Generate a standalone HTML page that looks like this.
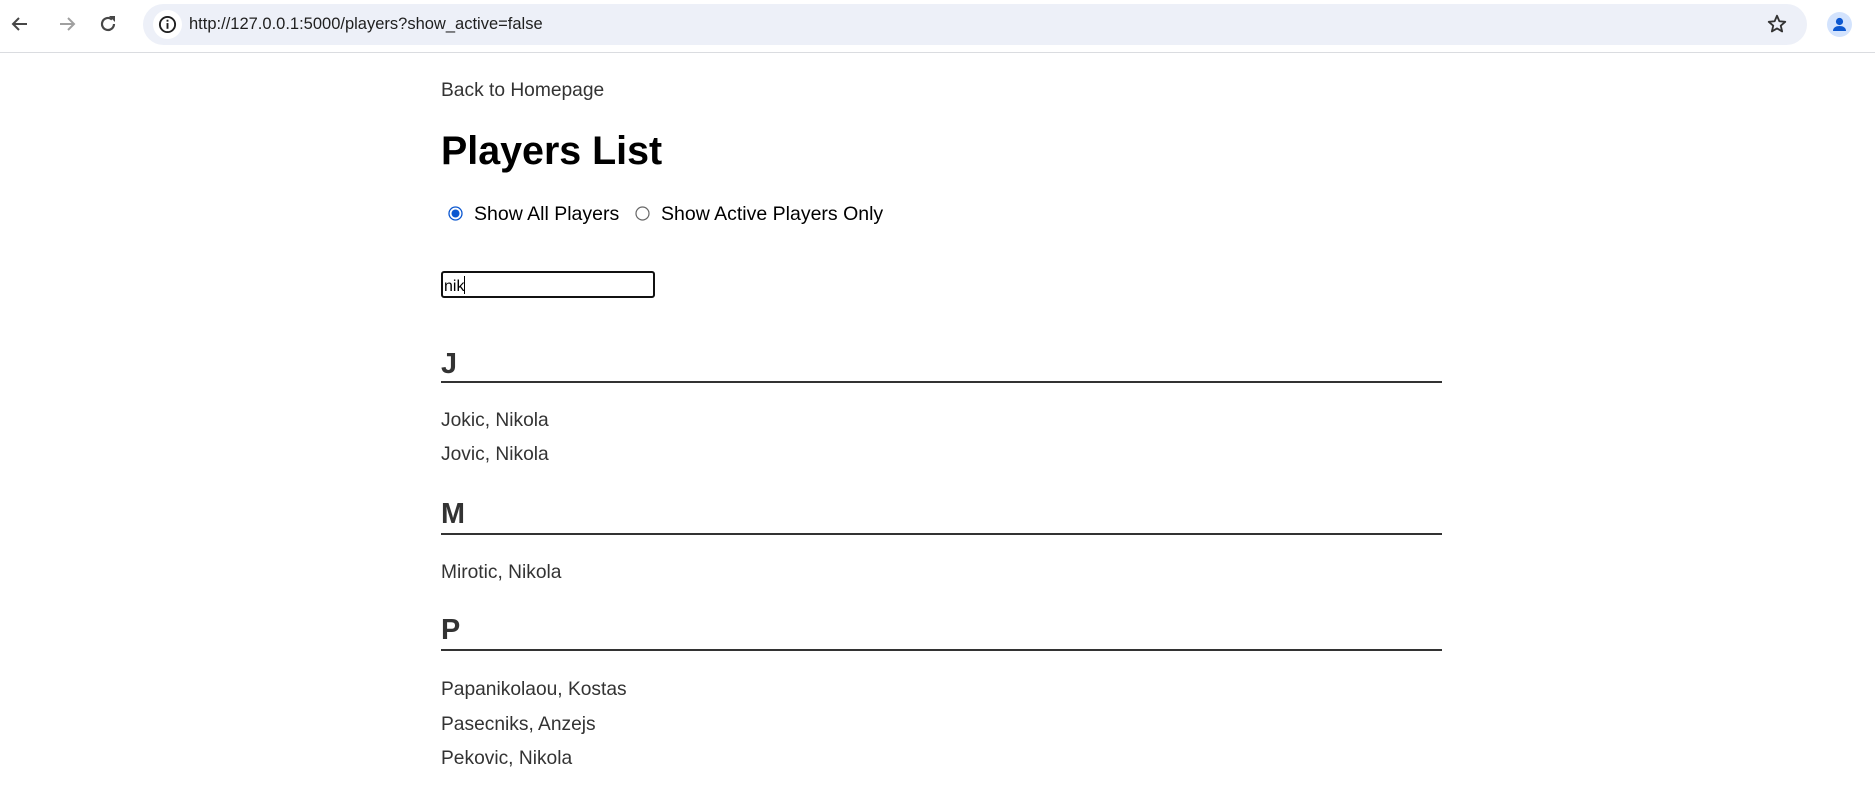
<!DOCTYPE html>
<html><head><meta charset="utf-8">
<style>
*{margin:0;padding:0;box-sizing:border-box}
html,body{width:1875px;height:786px;overflow:hidden;background:#fff;font-family:"Liberation Sans",Arial,sans-serif}
.tb{position:absolute;left:0;top:0;width:1875px;height:53px;background:#fff;border-bottom:1px solid #dadce0}
.pill{position:absolute;left:143px;top:4px;width:1664px;height:41px;border-radius:21px;background:#edf0f8}
.info{position:absolute;left:153px;top:10px;width:29px;height:29px;border-radius:50%;background:#fff}
.url{position:absolute;left:189px;top:13px;font-size:16.5px;color:#1f1f1f;line-height:22px;white-space:nowrap}
.url span{color:#474747}
.a{position:absolute;line-height:1;white-space:nowrap}
.t{font-size:19.2px;color:#333}
.h{font-size:28.8px;font-weight:bold;color:#333}
.hr{position:absolute;left:441px;width:1001px;height:2px;background:#333}
</style></head><body>
<div class="tb">
<svg style="position:absolute;left:8px;top:12px" width="24" height="24" viewBox="0 0 24 24"><path d="M19 12H5M11 6l-6 6 6 6" fill="none" stroke="#474747" stroke-width="2"/></svg>
<svg style="position:absolute;left:55px;top:12px" width="24" height="24" viewBox="0 0 24 24"><path d="M5 12h14M13 6l6 6-6 6" fill="none" stroke="#a0a0a0" stroke-width="2"/></svg>
<svg style="position:absolute;left:96px;top:12px" width="24" height="24" viewBox="0 0 24 24"><path d="M18 12a6 6 0 1 1-2-4.5" fill="none" stroke="#474747" stroke-width="2.2"/><path d="M13 4h6v6z" fill="#474747"/></svg>
<div class="pill"></div>
<div class="info"></div>
<svg style="position:absolute;left:158px;top:15px" width="19" height="19" viewBox="0 0 20 20"><circle cx="10" cy="10" r="8" fill="none" stroke="#1f1f1f" stroke-width="2"/><rect x="9" y="8.5" width="2" height="6" fill="#1f1f1f"/><rect x="9" y="5" width="2" height="2" fill="#1f1f1f"/></svg>
<div class="url">http://127.0.0.1:5000/players?show_active=false</div>
<svg style="position:absolute;left:1766px;top:13px" width="22" height="22" viewBox="0 0 24 24"><path d="M12 3l2.6 6 6.4.6-4.9 4.2 1.5 6.3L12 16.8 6.4 20.1l1.5-6.3L3 9.6 9.4 9z" fill="none" stroke="#333" stroke-width="2" stroke-linejoin="round"/></svg>
<div style="position:absolute;left:1827px;top:12px;width:25px;height:25px;border-radius:50%;background:#d3e3fd"></div>
<svg style="position:absolute;left:1827px;top:12px" width="25" height="25" viewBox="0 0 25 25"><circle cx="12.5" cy="9.5" r="3.6" fill="#0b57d0"/><path d="M6 19c0-3.5 3-5 6.5-5s6.5 1.5 6.5 5z" fill="#0b57d0"/></svg>
</div>

<div class="a t" style="left:441px;top:81px">Back to Homepage</div>
<div class="a" style="left:441px;top:132px;font-size:39.4px;font-weight:bold;color:#000">Players List</div>
<svg style="position:absolute;left:448px;top:206px" width="15" height="15" viewBox="0 0 15 15"><circle cx="7.5" cy="7.5" r="6.5" fill="#fff" stroke="#0b57d0" stroke-width="1.3"/><circle cx="7.5" cy="7.5" r="4" fill="#0b57d0"/></svg>
<div class="a" style="left:474px;top:205px;font-size:19.5px;color:#000">Show All Players</div>
<svg style="position:absolute;left:635px;top:206px" width="15" height="15" viewBox="0 0 15 15"><circle cx="7.5" cy="7.5" r="6.5" fill="#fff" stroke="#666" stroke-width="1.2"/></svg>
<div class="a" style="left:661px;top:205px;font-size:19.5px;color:#000">Show Active Players Only</div>

<div style="position:absolute;left:441px;top:271px;width:214px;height:27px;border:2px solid #111;border-radius:3px"></div>
<div class="a" style="left:444px;top:276px;font-size:16px;color:#000">nik<span style="display:inline-block;width:1px;height:18px;background:#000;vertical-align:-3px"></span></div>

<div class="a h" style="left:441px;top:350px">J</div>
<div class="hr" style="top:381px"></div>
<div class="a t" style="left:441px;top:411px">Jokic, Nikola</div>
<div class="a t" style="left:441px;top:445px">Jovic, Nikola</div>
<div class="a h" style="left:441px;top:500px">M</div>
<div class="hr" style="top:533px"></div>
<div class="a t" style="left:441px;top:563px">Mirotic, Nikola</div>
<div class="a h" style="left:441px;top:616px">P</div>
<div class="hr" style="top:649px"></div>
<div class="a t" style="left:441px;top:680px">Papanikolaou, Kostas</div>
<div class="a t" style="left:441px;top:715px">Pasecniks, Anzejs</div>
<div class="a t" style="left:441px;top:749px">Pekovic, Nikola</div>
</body></html>
